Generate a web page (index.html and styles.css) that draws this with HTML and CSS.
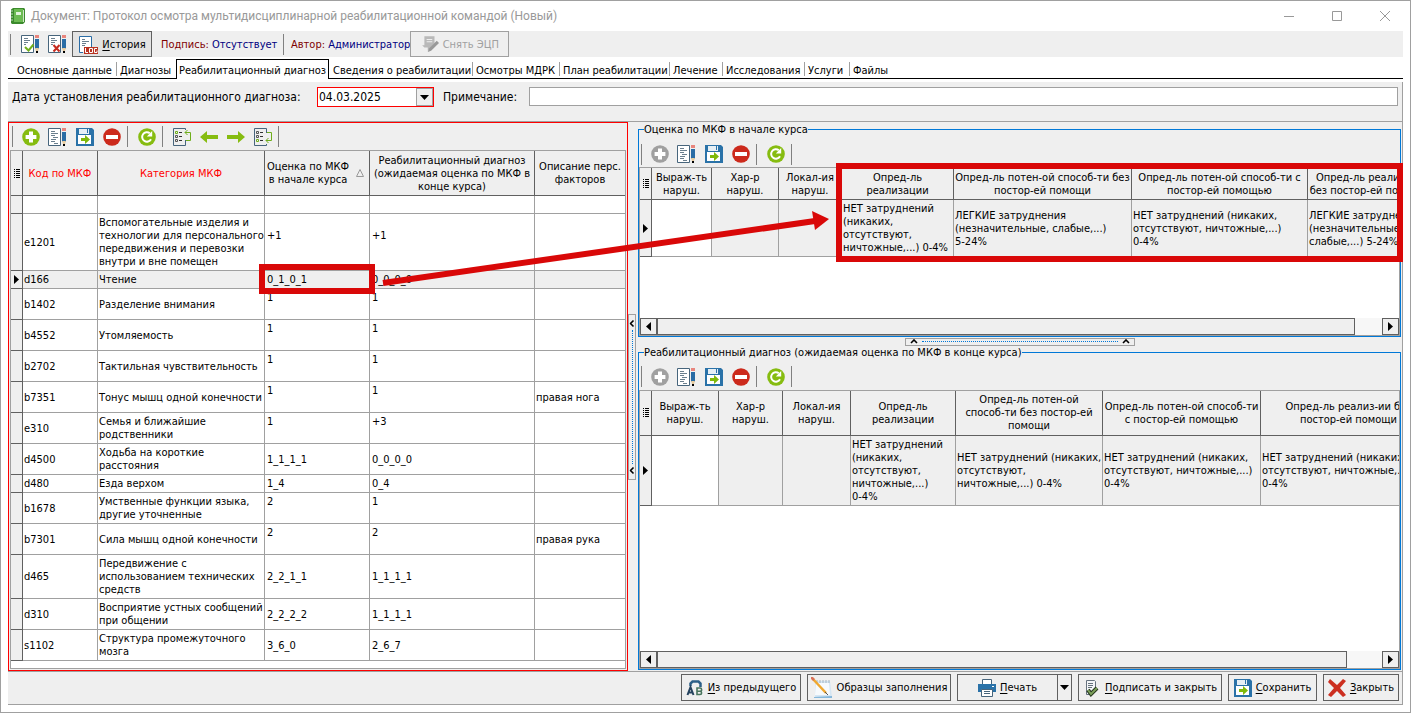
FILE: index.html
```html
<!DOCTYPE html>
<html lang="ru">
<head>
<meta charset="utf-8">
<title>Документ: Протокол осмотра мультидисциплинарной реабилитационной командой (Новый)</title>
<link rel="stylesheet" href="styles.css">
</head>
<body>
<svg class="defs" aria-hidden="true">
  <symbol id="i-add" viewBox="0 0 18 18"><circle cx="9" cy="9" r="8.8" fill="currentColor"/><path d="M7 3.600h4V7h3.400v4H11v3.400H7V11H3.600V7H7z" fill="#fff"/></symbol>
  <symbol id="i-del" viewBox="0 0 18 18"><circle cx="9" cy="9" r="8.800" fill="#cc2a1c"/><path d="M3 7h12v4H3z" fill="#fff"/></symbol>
  <symbol id="i-ref" viewBox="0 0 18 18"><circle cx="9" cy="9" r="8.800" fill="#86bc10"/><path d="M13 11.200A4.700 4.700 0 1 1 11.800 5.300" fill="none" stroke="#fff" stroke-width="2"/><path d="M14.200 3v5.500H8.800z" fill="#fff"/></symbol>
  <symbol id="i-edit" viewBox="0 0 19 18"><path d="M.500.500h12v17H.500z" fill="#fff" stroke="#47657c"/><path d="M3 3.500h4M3 5.500h7M3 7.500h4M5 9.500h5M3 11.500h5M3 13.500h4M6 15.500h4" stroke="#6b7f8e"/><path d="M14 0h4v3h-4z" fill="#e8857d"/><path d="M14 4h4v10h-4z" fill="#2a6ca5"/><path d="M14 13h4l-1 3h-2z" fill="#e8cda0"/><path d="M15 16h2v2h-2z" fill="#000"/></symbol>
  <symbol id="i-save" viewBox="0 0 18 18"><path d="M0 0h16l2 2v16H0z" fill="#2a72a8"/><path d="M3 1h10v5H3z" fill="#e6eff5"/><path d="M11 1h1v4h-1z" fill="#2a72a8"/><path d="M2 7h13v9H2z" fill="#fff"/><path d="M5 10h4V7l5 4.500L9 16v-3H5z" fill="#7fb90a"/></symbol>
  <symbol id="i-check" viewBox="0 0 19 18"><path d="M.500.500h12v17H.500z" fill="#fff" stroke="#47657c"/><path d="M3 3.500h4M3 5.500h6M3 7.500h4M3 9.500h2" stroke="#6b7f8e"/><path d="M14 0h4v3h-4z" fill="#e8857d"/><path d="M14 4h4v10h-4z" fill="#2a6ca5"/><path d="M14 13h4l-1 3h-2z" fill="#e8cda0"/><path d="M15 16h2v2h-2z"/><path d="M4 12l3.500 3.500 5-6" fill="none" stroke="#6fae1c" stroke-width="2"/></symbol>
  <symbol id="i-cross" viewBox="0 0 19 18"><path d="M.500.500h12v17H.500z" fill="#fff" stroke="#47657c"/><path d="M3 3.500h4M3 5.500h6M3 7.500h4M3 9.500h2" stroke="#6b7f8e"/><path d="M14 0h4v3h-4z" fill="#e8857d"/><path d="M14 4h4v10h-4z" fill="#2a6ca5"/><path d="M14 13h4l-1 3h-2z" fill="#e8cda0"/><path d="M15 16h2v2h-2z"/><path d="M5.500 10l6 6.500m0-6.500l-6 6.500" stroke="#c62a1e" stroke-width="2"/></symbol>
  <symbol id="i-arrow" viewBox="0 0 18 12"><path d="M0 6l7-6v4h11v4H7v4z" fill="#86bc10"/></symbol>
  <symbol id="i-up" viewBox="0 0 18 18"><path d="M12.500 2V.500H.500v17h12V12" fill="none" stroke="#47657c"/><path d="M2.500 3.500h2v2h-2z" fill="none" stroke="#6fae1c"/><path d="M2.500 7.500h2v2h-2zM2.500 11.500h2v2h-2z" fill="none" stroke="#555"/><path d="M6 4.500h3M6 8.500h3M6 12.500h3" stroke="#333"/><path d="M13 12.500h4.500v-8H12m2.500-2.500L12 4.500 14.500 7" fill="none" stroke="#6fae1c"/></symbol>
  <symbol id="i-down" viewBox="0 0 18 18"><path d="M12.500 5V.500H.500v17h12V16" fill="none" stroke="#47657c"/><path d="M2.500 3.500h2v2h-2zM2.500 7.500h2v2h-2z" fill="none" stroke="#555"/><path d="M2.500 11.500h2v2h-2z" fill="none" stroke="#6fae1c"/><path d="M6 4.500h3M6 8.500h3M6 12.500h3" stroke="#333"/><path d="M13 4.500h4.500v8H12m2.500-2.500L12 12.500l2.500 2.500" fill="none" stroke="#6fae1c"/></symbol>
  <symbol id="i-list" viewBox="0 0 6 9"><path d="M0 .5h1M0 2.500h1M0 4.500h1M0 6.500h1M0 8.500h1M2 .5h4M2 2.500h4M2 4.500h4M2 6.500h4M2 8.500h4" stroke="#000"/></symbol>
  <symbol id="i-right" viewBox="0 0 5 9"><path d="M0 0l5 4.500L0 9z"/></symbol>
  <symbol id="i-left" viewBox="0 0 5 9"><path d="M5 0L0 4.500 5 9z"/></symbol>
  <symbol id="i-drop" viewBox="0 0 9 5"><path d="M0 0h9L4.500 5z"/></symbol>
  <symbol id="i-chev" viewBox="0 0 8 5"><path d="M1 4l3-3 3 3" fill="none" stroke="#000" stroke-width="1.600"/></symbol>
</svg>

<div class="window">
  <header class="title">
    <svg class="book" viewBox="0 0 14 16"><path d="M0 1.500L2 0h11l1 1v13l-2 2H1l-1-1z" fill="#3b8a2c"/><path d="M3 1h9v13H3z" fill="#6cbb52"/><path d="M5 4h5v3H5z" fill="#e3f3dc"/><path d="M0 3h2M0 6h2M0 9h2M0 12h2" stroke="#bcd8b4"/><path d="M12.500 2v12" stroke="#cfe6c8"/></svg>
    <h1>Документ: Протокол осмотра мультидисциплинарной реабилитационной командой (Новый)</h1>
    <div class="winbtns">
      <button aria-label="Свернуть"><svg viewBox="0 0 12 12"><path d="M1 6.500h10" stroke="#999"/></svg></button>
      <button aria-label="Развернуть"><svg viewBox="0 0 12 12"><path d="M1.500 1.500h9v9h-9z" fill="none" stroke="#999"/></svg></button>
      <button aria-label="Закрыть окно"><svg viewBox="0 0 12 12"><path d="M1 1l10 10M11 1L1 11" stroke="#999"/></svg></button>
    </div>
  </header>

  <div class="maintools">
    <i class="sep"></i>
    <button class="tool" aria-label="Подписать"><svg class="ic wide"><use href="#i-check"/></svg></button>
    <button class="tool" aria-label="Отменить подпись"><svg class="ic wide"><use href="#i-cross"/></svg></button>
    <button class="btn history"><svg class="log" viewBox="0 0 20 19"><path d="M5 17.500H1.500v-16h12V12" fill="#fff" stroke="#2a6ca5"/><path d="M4 4.500h3M4 6.500h7M4 8.500h4M4 10.500h3" stroke="#6b7f8e"/><path d="M6 12h14v7H6z" fill="#b93322"/><path d="M7.500 13v4.500H10M11.500 13.500h3v4h-3zM19 13.500h-2.500v4H19v-2" fill="none" stroke="#fff"/></svg><span><u>И</u>стория</span></button>
    <span class="info"><b>Подпись:</b> <em>Отсутствует</em></span>
    <i class="sep"></i>
    <span class="info author"><b>Автор:</b> <em>Администратор</em></span>
    <button class="btn unsign" disabled><svg class="ic" viewBox="0 0 16 16"><path d="M3 1h9v6l-6 7v-3H3l-2-2h2z" fill="#b9b9b9"/><path d="M5 4h5M5 6h5" stroke="#eee"/><path d="M14 5l2 2-7 7-3 1 1-3z" fill="#999"/></svg><span>Снять ЭЦП</span></button>
  </div>

  <nav class="tabs" role="tablist">
    <button role="tab" class="t1">Основные данные</button>
    <button role="tab" class="t2">Диагнозы</button>
    <button role="tab" class="active" aria-selected="true">Реабилитационный диагноз</button>
    <button role="tab" class="t4">Сведения о реабилитации</button>
    <button role="tab" class="t5">Осмотры МДРК</button>
    <button role="tab" class="t6">План реабилитации</button>
    <button role="tab" class="t7">Лечение</button>
    <button role="tab" class="t8">Исследования</button>
    <button role="tab" class="t9">Услуги</button>
    <button role="tab" class="t10">Файлы</button>
  </nav>

  <main class="page">
    <div class="fields">
      <label class="datelabel" for="date">Дата установления реабилитационного диагноза:</label>
      <div class="combo"><input id="date" type="text" value="04.03.2025"><button aria-label="Открыть календарь"><svg class="drop"><use href="#i-drop"/></svg></button></div>
      <label class="notelabel" for="note">Примечание:</label>
      <input id="note" class="note" type="text">
    </div>

    <div class="split">
      <section class="left">
        <div class="tools">
          <i class="sep"></i>
          <button class="tool" aria-label="Добавить"><svg class="ic green"><use href="#i-add"/></svg></button>
          <button class="tool" aria-label="Изменить"><svg class="ic wide"><use href="#i-edit"/></svg></button>
          <button class="tool" aria-label="Сохранить строку"><svg class="ic"><use href="#i-save"/></svg></button>
          <button class="tool" aria-label="Удалить"><svg class="ic"><use href="#i-del"/></svg></button>
          <i class="sep"></i>
          <button class="tool" aria-label="Обновить"><svg class="ic"><use href="#i-ref"/></svg></button>
          <i class="sep"></i>
          <button class="tool" aria-label="В начало"><svg class="ic"><use href="#i-up"/></svg></button>
          <button class="tool" aria-label="Назад"><svg class="ar"><use href="#i-arrow"/></svg></button>
          <button class="tool" aria-label="Вперёд"><svg class="ar flip"><use href="#i-arrow"/></svg></button>
          <button class="tool" aria-label="В конец"><svg class="ic"><use href="#i-down"/></svg></button>
          <i class="sep"></i>
        </div>
        <div class="frame">
          <table class="grid codes">
            <colgroup><col class="c-ind"><col class="c-code"><col class="c-cat"><col class="c-start"><col class="c-end"><col></colgroup>
            <thead><tr><th class="ind"><svg class="list"><use href="#i-list"/></svg></th><th class="req">Код по МКФ</th><th class="req">Категория МКФ</th><th><div class="sorted"><span>Оценка по МКФ<br>в начале курса</span><svg viewBox="0 0 8 8"><path d="M4 .5L7.500 7.500h-7z" fill="none" stroke="#999"/></svg></div></th><th>Реабилитационный диагноз<br>(ожидаемая оценка по МКФ в<br>конце курса)</th><th>Описание перс.<br>факторов</th></tr></thead>
            <tbody>
              <tr class="low"><td class="ind"></td><td></td><td></td><td></td><td></td><td></td></tr>
              <tr><td class="ind"></td><td>e1201</td><td>Вспомогательные изделия и<br>технологии для персонального<br>передвижения и перевозки<br>внутри и вне помещен</td><td class="mark">+1</td><td class="mark">+1</td><td></td></tr>
              <tr class="low current"><td class="ind"><svg class="tri"><use href="#i-right"/></svg></td><td>d166</td><td>Чтение</td><td>0_1_0_1</td><td>0_0_0_0</td><td></td></tr>
              <tr><td class="ind"></td><td>b1402</td><td>Разделение внимания</td><td class="mark">1</td><td class="mark">1</td><td></td></tr>
              <tr><td class="ind"></td><td>b4552</td><td>Утомляемость</td><td class="mark">1</td><td class="mark">1</td><td></td></tr>
              <tr><td class="ind"></td><td>b2702</td><td>Тактильная чувствительность</td><td class="mark">1</td><td class="mark">1</td><td></td></tr>
              <tr><td class="ind"></td><td>b7351</td><td>Тонус мышц одной конечности</td><td class="mark">1</td><td class="mark">1</td><td>правая нога</td></tr>
              <tr><td class="ind"></td><td>e310</td><td>Семья и ближайшие<br>родственники</td><td class="mark">1</td><td class="mark">+3</td><td></td></tr>
              <tr><td class="ind"></td><td>d4500</td><td>Ходьба на короткие<br>расстояния</td><td>1_1_1_1</td><td>0_0_0_0</td><td></td></tr>
              <tr class="low"><td class="ind"></td><td>d480</td><td>Езда верхом</td><td>1_4</td><td>0_4</td><td></td></tr>
              <tr><td class="ind"></td><td>b1678</td><td>Умственные функции языка,<br>другие уточненные</td><td class="mark">2</td><td class="mark">1</td><td></td></tr>
              <tr><td class="ind"></td><td>b7301</td><td>Сила мышц одной конечности</td><td class="mark">2</td><td class="mark">2</td><td>правая рука</td></tr>
              <tr><td class="ind"></td><td>d465</td><td>Передвижение с<br>использованием технических<br>средств</td><td>2_2_1_1</td><td>1_1_1_1</td><td></td></tr>
              <tr><td class="ind"></td><td>d310</td><td>Восприятие устных сообщений<br>при общении</td><td>2_2_2_2</td><td>1_1_1_1</td><td></td></tr>
              <tr><td class="ind"></td><td>s1102</td><td>Структура промежуточного<br>мозга</td><td>3_6_0</td><td>2_6_7</td><td></td></tr>
            </tbody>
          </table>
        </div>
      </section>

      <div class="vsplit"><button aria-label="Свернуть левую панель"><svg class="chev turn"><use href="#i-chev"/></svg><i></i><svg class="chev turn"><use href="#i-chev"/></svg></button></div>

      <section class="right">
        <fieldset class="group first">
          <legend>Оценка по МКФ в начале курса</legend>
          <div class="tools">
            <i class="sep"></i>
            <button class="tool" aria-label="Добавить" disabled><svg class="ic gray"><use href="#i-add"/></svg></button>
            <button class="tool" aria-label="Изменить"><svg class="ic wide"><use href="#i-edit"/></svg></button>
            <button class="tool" aria-label="Сохранить строку"><svg class="ic"><use href="#i-save"/></svg></button>
            <button class="tool" aria-label="Удалить"><svg class="ic"><use href="#i-del"/></svg></button>
            <i class="sep"></i>
            <button class="tool" aria-label="Обновить"><svg class="ic"><use href="#i-ref"/></svg></button>
            <i class="sep"></i>
          </div>
          <div class="frame">
            <table class="grid start">
              <colgroup><col class="c-ind"><col class="a1"><col class="a2"><col class="a3"><col class="a4"><col class="a5"><col class="a6"><col class="a7"></colgroup>
              <thead><tr><th class="ind"><svg class="list"><use href="#i-list"/></svg></th><th>Выраж-ть<br>наруш.</th><th>Хар-р<br>наруш.</th><th>Локал-ия<br>наруш.</th><th>Опред-ль<br>реализации</th><th>Опред-ль потен-ой способ-ти без<br>постор-ей помощи</th><th>Опред-ль потен-ой способ-ти с<br>постор-ей помощью</th><th>Опред-ль реализ-ии<br>без постор-ей помощи</th></tr></thead>
              <tbody><tr class="current"><td class="ind"><svg class="tri"><use href="#i-right"/></svg></td><td class="focus"></td><td></td><td></td><td>НЕТ затруднений<br>(никаких,<br>отсутствуют,<br>ничтожные,...) 0-4%</td><td>ЛЕГКИЕ затруднения<br>(незначительные, слабые,...)<br>5-24%</td><td>НЕТ затруднений (никаких,<br>отсутствуют, ничтожные,...)<br>0-4%</td><td>ЛЕГКИЕ затруднения<br>(незначительные,<br>слабые,...) 5-24%</td></tr></tbody>
            </table>
            <div class="scroll"><button aria-label="Прокрутить влево"><svg class="tri"><use href="#i-left"/></svg></button><div class="thumb"></div><button aria-label="Прокрутить вправо"><svg class="tri"><use href="#i-right"/></svg></button></div>
          </div>
        </fieldset>

        <div class="hsplit"><button aria-label="Свернуть верхнюю панель"><svg class="chev"><use href="#i-chev"/></svg><i></i><svg class="chev"><use href="#i-chev"/></svg></button></div>

        <fieldset class="group second">
          <legend>Реабилитационный диагноз (ожидаемая оценка по МКФ в конце курса)</legend>
          <div class="tools">
            <i class="sep"></i>
            <button class="tool" aria-label="Добавить" disabled><svg class="ic gray"><use href="#i-add"/></svg></button>
            <button class="tool" aria-label="Изменить"><svg class="ic wide"><use href="#i-edit"/></svg></button>
            <button class="tool" aria-label="Сохранить строку"><svg class="ic"><use href="#i-save"/></svg></button>
            <button class="tool" aria-label="Удалить"><svg class="ic"><use href="#i-del"/></svg></button>
            <i class="sep"></i>
            <button class="tool" aria-label="Обновить"><svg class="ic"><use href="#i-ref"/></svg></button>
            <i class="sep"></i>
          </div>
          <div class="frame">
            <table class="grid end">
              <colgroup><col class="c-ind"><col class="b1"><col class="b2"><col class="b3"><col class="b4"><col class="b5"><col class="b6"><col class="b7"></colgroup>
              <thead><tr><th class="ind"><svg class="list"><use href="#i-list"/></svg></th><th>Выраж-ть<br>наруш.</th><th>Хар-р<br>наруш.</th><th>Локал-ия<br>наруш.</th><th>Опред-ль<br>реализации</th><th>Опред-ль потен-ой<br>способ-ти без постор-ей<br>помощи</th><th>Опред-ль потен-ой способ-ти<br>с постор-ей помощью</th><th>Опред-ль реализ-ии без<br>постор-ей помощи</th></tr></thead>
              <tbody><tr class="current"><td class="ind"><svg class="tri"><use href="#i-right"/></svg></td><td class="focus"></td><td></td><td></td><td>НЕТ затруднений<br>(никаких,<br>отсутствуют,<br>ничтожные,...)<br>0-4%</td><td>НЕТ затруднений (никаких,<br>отсутствуют,<br>ничтожные,...) 0-4%</td><td>НЕТ затруднений (никаких,<br>отсутствуют, ничтожные,...)<br>0-4%</td><td>НЕТ затруднений (никаких,<br>отсутствуют, ничтожные,...)<br>0-4%</td></tr></tbody>
            </table>
            <div class="scroll"><button aria-label="Прокрутить влево"><svg class="tri"><use href="#i-left"/></svg></button><div class="thumb"></div><button aria-label="Прокрутить вправо"><svg class="tri"><use href="#i-right"/></svg></button></div>
          </div>
        </fieldset>
      </section>
    </div>

    <footer class="actions">
      <button class="btn w1"><svg class="ic" viewBox="0 0 18 18"><path d="M4.500 7V4.500l2-2h6l2 2V8" fill="none" stroke="#2c5f88" stroke-width="2.500"/><path d="M1.500 16l3-8 3 8M3 13.500h3" fill="none" stroke="#26435f" stroke-width="2"/><path d="M11 9v6.500h3a1.600 1.600 0 0 0 0-3.200 1.600 1.600 0 0 0 0-3.300zM11 12.300h3" fill="none" stroke="#48745d" stroke-width="1.600"/></svg><span><u>И</u>з предыдущего</span></button>
      <button class="btn w2"><svg class="pad" viewBox="0 0 22 22"><path d="M4 4h15l2 16-17 1z" fill="#d5e6f3"/><path d="M5 6h13l1 12H4z" fill="#f7fafd"/><path d="M3 20l18-1v2H3z" fill="#85b7da"/><path d="M6 3v3M9 3v3M12 3v3M15 3v3M18 3v3" stroke="#a7b5c0"/><path d="M1 1l14 15" stroke="#f0a830" stroke-width="2.500"/><path d="M0 0l3 3" stroke="#d8705a" stroke-width="2.500"/><path d="M14 15l3 3" stroke="#555"/></svg><span>Образцы заполнения</span></button>
      <div class="printbox">
        <button class="btn print"><svg class="ic" viewBox="0 0 18 18"><path d="M4.500.500h9V6h-9z" fill="#fff" stroke="#47657c"/><path d="M0 5h18v8H0z" fill="#2a72a8"/><path d="M14 7h2v1h-2z" fill="#fff"/><path d="M3.500 10.500h11v7h-11z" fill="#fff" stroke="#47657c"/><path d="M6 12.500h6M6 14.500h6" stroke="#47657c"/></svg><span><u>П</u>ечать</span></button><button class="btn more" aria-label="Варианты печати"><svg class="drop"><use href="#i-drop"/></svg></button>
      </div>
      <button class="btn w3"><svg class="ic" viewBox="0 0 18 18"><path d="M3.500 1.500h8l1 1V10L7 15.500H3.500z" fill="#f4f6f8" stroke="#66727e"/><path d="M5 4.500h5M5 6.500h5M5 8.500h4" stroke="#66727e"/><path d="M5 11l3 4 6-6" fill="none" stroke="#26361f" stroke-width="4"/><path d="M5 11l3 4 6-6" fill="none" stroke="#7ba05a" stroke-width="2"/></svg><span><u>П</u>одписать и закрыть</span></button>
      <button class="btn w4"><svg class="ic"><use href="#i-save"/></svg><span><u>С</u>охранить</span></button>
      <button class="btn w5"><svg class="ic" viewBox="0 0 18 18"><path d="M2 0l7 6 6-6 3 2-6 7 6 7-3 2-6-6-6 6-3-2 6-7-6-6z" fill="#cc2f20"/></svg><span><u>З</u>акрыть</span></button>
    </footer>
  </main>

  <svg class="notes" viewBox="0 0 1411 713" width="1411" height="713" aria-hidden="true">
    <path d="M262 267h110v24H262zM839 166h561v93H839z" fill="none" stroke="#d90808" stroke-width="6"/>
    <path d="M383 283L815 221" stroke="#d90808" stroke-width="6"/>
    <path d="M829 219l-17-8 3 19z" fill="#d90808"/>
  </svg>
</div>
</body>
</html>
```
FILE: styles.css
```css
* { box-sizing: border-box; }
body { margin: 0; font: 11px/13px "DejaVu Sans Condensed", "Noto Sans", sans-serif; color: #000; background: #fff; }
button, input { font: inherit; color: inherit; }
button { padding: 0; border: 0; background: none; white-space: nowrap; }
svg { display: block; flex: none; }
u { text-underline-offset: 2px; }
.defs { display: none; }

.window { position: relative; display: flex; flex-direction: column; min-height: 100vh; padding: 0 7px 7px; border: 1px solid #a0a0a0; }
.title { display: flex; align-items: center; height: 30px; padding-left: 3px; color: #999; }
.title h1 { flex: 1; margin: 0 0 0 6px; font: 12px/16px Roboto, "Noto Sans", sans-serif; }
.book { width: 14px; height: 16px; }
.winbtns { display: flex; margin-right: -6px; }
.winbtns button { display: grid; place-items: center; width: 48px; height: 30px; }
.winbtns svg { width: 12px; height: 12px; }

.ic { width: 18px; height: 18px; }
.ic.wide { width: 19px; }
.green { color: #86bc10; }
.gray { color: #a0a0a0; }
.ar { width: 18px; height: 12px; }
.flip { transform: rotate(180deg); }
.list { width: 6px; height: 9px; margin: 0 auto; }
.tri { width: 5px; height: 9px; margin: 0 auto; }
.drop { width: 9px; height: 5px; }
.chev { width: 8px; height: 5px; }
.turn { transform: rotate(-90deg); }

.sep { flex: none; width: 1px; height: 21px; background: #808080; }
.tool { display: grid; place-items: center; width: 27px; height: 26px; }
.btn { display: flex; align-items: center; justify-content: center; gap: 4px; height: 27px; border: 1px solid #606060; background: #efefef; }
.btn:disabled { border-color: #a0a0a0; color: #a0a0a0; }

.maintools { display: flex; align-items: center; height: 26px; padding-left: 2px; background: #efefef; }
.maintools > .tool:nth-of-type(1) { margin-left: 6px; }
.maintools .btn { height: 26px; }
.maintools .history { width: 80px; margin: 0 9px 0 1px; background: #e3e3e3; }
.log { width: 20px; height: 19px; }
.info { min-width: 118px; margin-right: 4px; white-space: nowrap; }
.maintools .author { min-width: 0; margin: 0 0 0 7px; }
.info b { font-weight: normal; color: #800000; }
.info em { font-style: normal; color: #000080; }
.unsign { width: 99px; }

.tabs { display: flex; height: 22px; padding: 2px 0 0 4px; border-bottom: 1px solid #000; }
.tabs button { position: relative; flex: none; height: 19px; padding: 3px 0 0 4px; text-align: left; line-height: 13px; }
.tabs button + button::before { content: ""; position: absolute; left: 0; top: 3px; width: 1px; height: 14px; background: #a0a0a0; }
.tabs .active { width: 153px; height: 20px; padding: 1px 0 0; border: 1px solid #000; border-bottom: 0; background: #fff; text-align: center; }
.tabs .active::before, .tabs .t4::before { display: none; }
.t1 { width: 104px; }
.tabs .t1 { padding-left: 5px; }
.t2 { width: 60px; }
.t4 { width: 143px; }
.t5 { width: 87px; }
.t6 { width: 110px; }
.t7 { width: 53px; }
.t8 { width: 82px; }
.t9 { width: 45px; }
.t10 { width: 45px; }

.page { flex: 1; display: flex; flex-direction: column; margin-top: 3px; background: #efefef; border-right: 1px solid #a0a0a0; border-bottom: 1px solid #a0a0a0; }
.fields { display: flex; align-items: flex-start; height: 40px; padding: 5px 4px 0; border-bottom: 1px solid #a0a0a0; font-size: 12px; line-height: 20px; }
.datelabel { width: 305px; white-space: nowrap; }
.combo { display: flex; width: 117px; height: 20px; border: 1px solid #f00; background: #fff; }
.combo input { flex: 1; min-width: 0; padding: 0 1px; border: 0; background: none; }
.combo button { display: grid; place-items: center; width: 17px; border: 1px solid #a0a0a0; background: #efefef; }
.notelabel { width: 86px; margin-left: 9px; }
.note { flex: 1; min-width: 0; height: 19px; border: 1px solid #a0a0a0; background: #fff; }

.split { flex: 1; display: flex; }
.left { flex: none; display: flex; flex-direction: column; width: 620px; padding: 0 1px 1px; border: 1px solid #f00; }
.tools { flex: none; display: flex; align-items: center; height: 31px; padding: 5px 0 0 2px; }
.left .tools { height: 27px; padding: 0 0 0 2px; }
.tools .sep + .tool { margin-left: 5px; }
.tools .tool + .sep { margin-left: 2px; }
.tools .sep:first-child + .tool { margin-left: 4px; }
.frame { flex: 1; display: flex; flex-direction: column; min-width: 0; overflow: hidden; border: 1px solid #a0a0a0; background: #fff; }

.grid { flex: none; table-layout: fixed; width: 100%; border-collapse: separate; border-spacing: 0; }
.grid th, .grid td { height: 31px; padding: 2px 1px; border-right: 1px solid #a0a0a0; border-bottom: 1px solid #a0a0a0; font-weight: normal; white-space: nowrap; }
.grid th { height: 32px; padding: 0; border-color: #606060; background: #efefef; text-align: center; }
.grid .low td { height: 18px; }
.grid .ind { padding: 0; border-color: #606060; background: #efefef; }
.grid .mark { padding-bottom: 15px; }
.grid .current td { background: #efefef; }
.grid .current .focus { background: #fff; }
.codes td:nth-child(4), .codes td:nth-child(5) { padding-left: 2px; }
.codes th { height: 45px; }
.codes tr > :last-child { border-right: 0; }
.codes .req { color: #f00; }
.sorted { display: flex; align-items: center; justify-content: space-between; padding: 0 5px 0 2px; }
.sorted svg { width: 8px; height: 8px; }
.c-ind { width: 12px; }
.c-code { width: 75px; }
.c-cat { width: 167px; }
.c-start { width: 105px; }
.c-end { width: 165px; }
.grid.start { width: 790px; }
.a1 { width: 60px; }
.a2 { width: 67px; }
.a3 { width: 63px; }
.a4 { width: 112px; }
.a5 { width: 178px; }
.a6 { width: 176px; }
.a7 { width: 122px; }
.start td { height: 57px; }
.grid.end { width: 797px; }
.b1 { width: 67px; }
.b2 { width: 64px; }
.b3 { width: 68px; }
.b4 { width: 105px; }
.b5 { width: 147px; }
.b6 { width: 158px; }
.b7 { width: 176px; }
.end th { height: 45px; }
.end td { height: 70px; }

.vsplit { flex: none; display: flex; align-items: center; width: 10px; }
.vsplit button { display: flex; flex-direction: column; align-items: center; justify-content: space-between; width: 8px; height: 166px; padding: 6px 0; border: 1px solid #a0a0a0; }
.vsplit i { flex: 1; margin: 4px 0; border-left: 1px dotted #0078d7; }
.right { flex: 1; min-width: 0; display: flex; flex-direction: column; padding: 1px 1px 1px 0; }
.group { flex: 213 0 0; display: flex; flex-direction: column; min-width: 0; margin: 0; padding: 0; border: 1px solid #0078d7; }
.group.second { flex-grow: 324; }
.group legend { margin-left: 5px; padding: 0; line-height: 13px; }
.hsplit { display: flex; justify-content: center; height: 9px; padding-top: 1px; }
.hsplit button { display: flex; align-items: center; width: 230px; height: 8px; padding: 0 4px; border: 1px solid #a0a0a0; }
.hsplit i { flex: 1; margin: 0 4px; border-top: 1px dotted #0078d7; }

.scroll { flex: none; display: flex; height: 17px; margin-top: auto; background: #f7f7f7; }
.scroll button { width: 17px; border: 1px solid #606060; background: #efefef; }
.thumb { flex: 1; margin-right: 27px; border: 1px solid #606060; background: #efefef; }
.second .thumb { margin-right: 35px; }

.actions { display: flex; justify-content: flex-end; gap: 6px; height: 33px; padding: 2px 3px 0 0; border-top: 1px solid #a0a0a0; }
.w1 { width: 120px; }
.w2 { width: 144px; }
.w3 { width: 144px; }
.w4 { width: 89px; }
.w5 { width: 76px; }
.pad { width: 22px; height: 22px; }
.printbox { display: flex; }
.print { width: 101px; }
.more { width: 15px; margin-left: -1px; }

.notes { position: absolute; left: -1px; top: -1px; pointer-events: none; }
```
